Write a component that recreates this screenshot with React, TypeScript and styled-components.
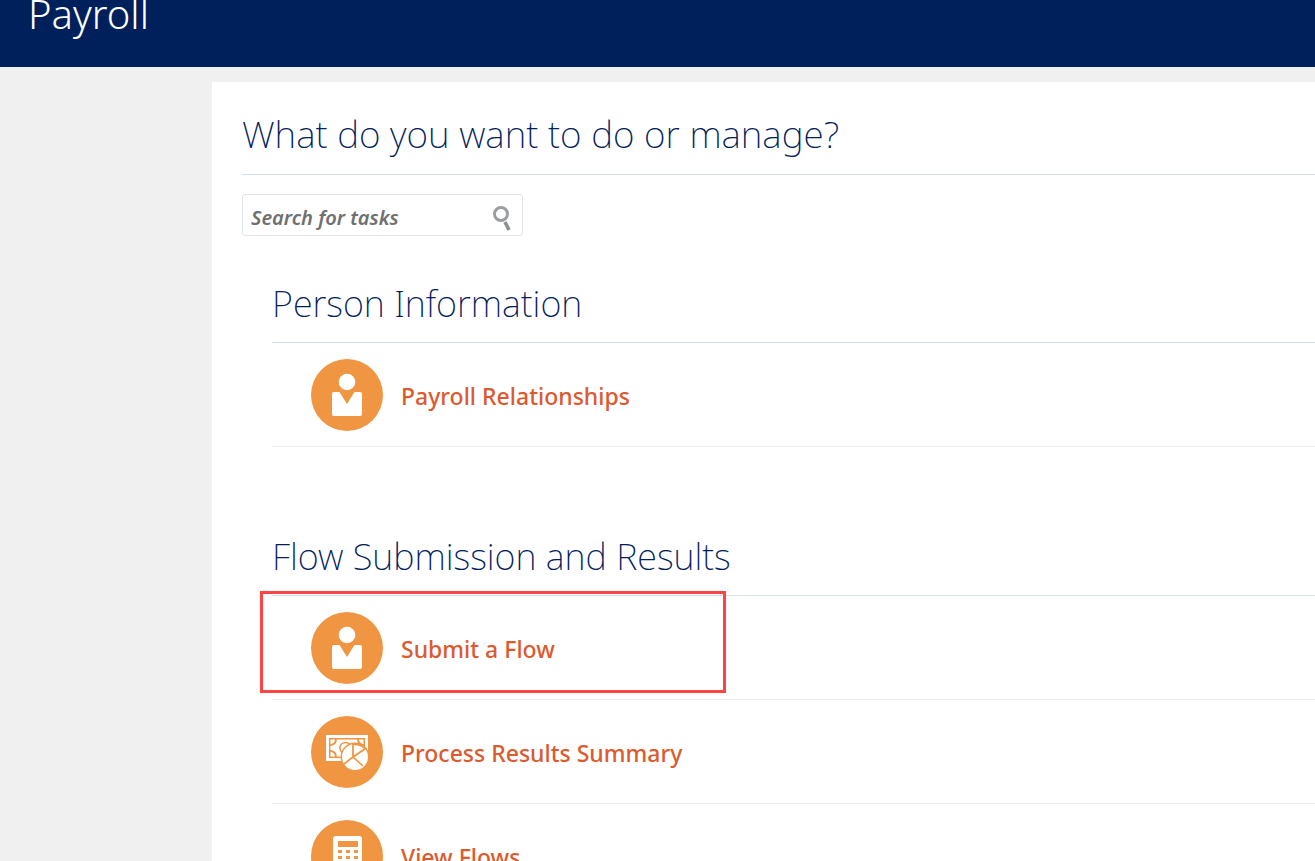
import React from "react";
import styled, { createGlobalStyle } from "styled-components";

const GlobalStyle = createGlobalStyle`
  *, *::before, *::after { box-sizing: border-box; }
  body { margin: 0; background: #f0f0f0; font-family: "Segoe UI", "Noto Sans", "Open Sans", sans-serif; }
  h1, h2, h3, ul { margin: 0; padding: 0; }
`;

const Page = styled.div`
  display: flex;
  flex-direction: column;
  height: 100vh;
`;

const Header = styled.header`
  display: flex;
  align-items: flex-end;
  flex: none;
  height: 67px;
  padding: 0 28px 25px;
  background: #00205b;
  overflow: hidden;
`;

const AppTitle = styled.h1`
  color: #fff;
  font-size: 40px;
  font-weight: 300;
  line-height: 56px;
`;

const Content = styled.main`
  flex: 1;
  min-height: 0;
  padding: 15px 0 0 212px;
  overflow-y: auto;
  scrollbar-width: none;
`;

const Panel = styled.div`
  min-height: 100%;
  padding: 24px 0 40px 30px;
  background: #fff;
`;

const PanelTitle = styled.h2`
  padding-bottom: 12px;
  border-bottom: 1px solid #d6dfe6;
  color: #00205b;
  font-size: 37px;
  font-weight: 200;
  line-height: 56px;
  white-space: nowrap;
`;

const SearchBox = styled.form`
  display: flex;
  align-items: center;
  width: 281px;
  height: 42px;
  margin-top: 19px;
  padding: 0 9px 0 8px;
  border: 1px solid #dfe4e7;
  border-radius: 3px;
`;

const SearchInput = styled.input`
  flex: 1;
  min-width: 0;
  height: 40px;
  padding: 4px 0 0;
  border: 0;
  outline: 0;
  background: none;
  color: #333;
  font-family: inherit;
  font-size: 20px;
  font-style: italic;
  font-weight: 600;
  &::placeholder { color: #707070; opacity: 1; }
`;

const SearchButton = styled.button`
  display: flex;
  padding: 6px 0 0;
  border: 0;
  background: none;
  cursor: pointer;
`;

const Section = styled.section<{ $gap: number }>`
  margin: ${(p) => p.$gap}px 0 0 30px;
`;

const SectionTitle = styled.h3`
  padding-bottom: 14px;
  border-bottom: 1px solid #d6dfe6;
  color: #00205b;
  font-size: 36px;
  font-weight: 200;
  line-height: 48px;
  white-space: nowrap;
`;

const TaskList = styled.ul`
  list-style: none;
`;

const TaskRow = styled.li`
  position: relative;
  padding: 16px 0 15px 39px;
  border-bottom: 1px solid #ececec;
`;

const TaskLink = styled.a`
  display: flex;
  align-items: center;
  gap: 18px;
  width: fit-content;
  color: #dc5a2d;
  font-size: 23px;
  font-weight: 500;
  line-height: 32px;
  text-decoration: none;
  white-space: nowrap;
`;

const TaskLabel = styled.span`
  padding-top: 1px;
`;

const Highlight = styled.div`
  position: absolute;
  top: -5px;
  left: -12px;
  width: 466px;
  height: 102px;
  border: 3px solid #ff4444;
  pointer-events: none;
`;

type IconName = "person" | "summary" | "calculator";

const glyphs: Record<IconName, React.ReactNode> = {
  person: (
    <g fill="#fff">
      <circle cx="36" cy="23" r="8.3" />
      <path d="M23 33H28.5L36 45L43.5 33H49Q51 33 51 35V55Q51 57 49 57H23Q21 57 21 55V35Q21 33 23 33Z" />
    </g>
  ),
  summary: (
    <>
      <path d="M15 19H57V45H15Z" fill="#fff" />
      <g fill="none" stroke="#f09643" strokeWidth="1.5">
        <path d="M18.7 22.7H53.3V41.3H18.7Z" />
        <path d="M25 22.7Q25 29 18.7 29M47 22.7Q47 29 53.3 29M18.7 35Q25 35 25 41.3" strokeWidth="1.9" />
        <circle cx="34.5" cy="32" r="5.6" />
      </g>
      <circle cx="44" cy="41" r="13.7" fill="#fff" stroke="#f09643" strokeWidth="1.4" />
      <path d="M42 41L33 48M42 41L52 50" fill="none" stroke="#f09643" strokeWidth="1.6" />
      <path d="M42 28.5Q49 28 54.5 32.5L42 41Z" fill="none" stroke="#f09643" strokeWidth="1.8" />
    </>
  ),
  calculator: (
    <>
      <rect x="22" y="16" width="29" height="42" rx="3" fill="#fff" />
      <path
        fill="#f09643"
        d="M27 21h20v6h-20zM27 30h4v3h-4zM35 30h4v3h-4zM43 30h4v3h-4zM27 36h4v3h-4zM35 36h4v3h-4zM43 36h4v3h-4zM27 42h4v3h-4zM35 42h4v3h-4zM43 42h4v3h-4zM27 48h4v3h-4zM35 48h4v3h-4zM43 48h4v3h-4z"
      />
    </>
  ),
};

const TaskIcon = ({ name }: { name: IconName }) => (
  <svg width="72" height="72" viewBox="0 0 72 72" aria-hidden="true">
    <circle cx="36" cy="36" r="36" fill="#f09643" />
    {glyphs[name]}
  </svg>
);

interface Task {
  label: string;
  icon: IconName;
  highlighted?: boolean;
}

const sections: { title: string; gap: number; tasks: Task[] }[] = [
  {
    title: "Person Information",
    gap: 44,
    tasks: [{ label: "Payroll Relationships", icon: "person" }],
  },
  {
    title: "Flow Submission and Results",
    gap: 86,
    tasks: [
      { label: "Submit a Flow", icon: "person", highlighted: true },
      { label: "Process Results Summary", icon: "summary" },
      { label: "View Flows", icon: "calculator" },
    ],
  },
];

export default function App() {
  return (
    <Page>
      <GlobalStyle />
      <Header>
        <AppTitle>Payroll</AppTitle>
      </Header>
      <Content>
        <Panel>
          <PanelTitle>What do you want to do or manage?</PanelTitle>
          <SearchBox role="search" onSubmit={(e) => e.preventDefault()}>
            <SearchInput type="text" placeholder="Search for tasks" aria-label="Search for tasks" />
            <SearchButton type="submit" aria-label="Search">
              <svg width="22" height="26" viewBox="0 0 22 26" aria-hidden="true">
                <circle cx="10" cy="9" r="6.5" fill="none" stroke="#9a9ea1" strokeWidth="3" />
                <path d="M14 17L18 25" stroke="#8b9093" strokeWidth="3.6" />
              </svg>
            </SearchButton>
          </SearchBox>
          {sections.map((section) => (
            <Section key={section.title} $gap={section.gap}>
              <SectionTitle>{section.title}</SectionTitle>
              <TaskList>
                {section.tasks.map((task) => (
                  <TaskRow key={task.label}>
                    <TaskLink href="#">
                      <TaskIcon name={task.icon} />
                      <TaskLabel>{task.label}</TaskLabel>
                    </TaskLink>
                    {task.highlighted && <Highlight />}
                  </TaskRow>
                ))}
              </TaskList>
            </Section>
          ))}
        </Panel>
      </Content>
    </Page>
  );
}
